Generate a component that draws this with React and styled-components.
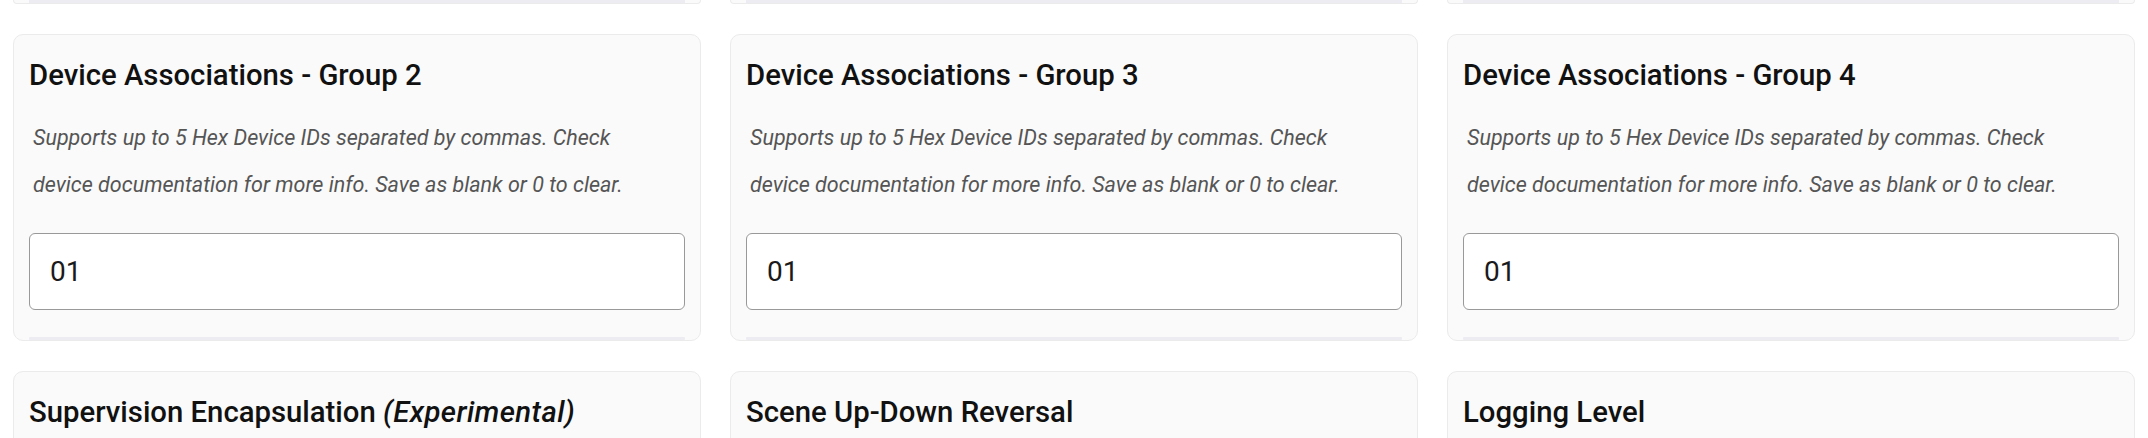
import React from "react";
import styled, { createGlobalStyle } from "styled-components";

const Global = createGlobalStyle`
  html, body {
    margin: 0;
    padding: 0;
    background: #ffffff;
    font-family: Roboto, "Noto Sans", "Liberation Sans", sans-serif;
    overflow: hidden;
  }
`;

const Page = styled.div`
  padding: 0 13px;
  height: 438px;
  overflow: hidden;
`;

const Grid = styled.div`
  display: grid;
  grid-template-columns: repeat(3, 1fr);
  column-gap: 29px;
  row-gap: 30px;
`;

const CardTail = styled.div`
  height: 4px;
  box-sizing: border-box;
  background: #fafafa;
  border: 1px solid #ebebeb;
  border-top: none;
  border-radius: 0 0 10px 10px;
  padding: 0 15px;
  display: flex;
  align-items: flex-end;
`;

const Card = styled.div`
  box-sizing: border-box;
  background: #fafafa;
  border: 1px solid #ebebeb;
  border-radius: 10px;
  padding: 0 15px;
  display: flex;
  flex-direction: column;
  height: ${(p) => (p.$open ? "200px" : "307px")};
`;

const Title = styled.h3`
  margin: 24px 0 0;
  font-size: 29.3px;
  line-height: 33px;
  font-weight: 500;
  color: #111111;
  white-space: nowrap;
`;

const Em = styled.em`
  font-style: italic;
  font-weight: 500;
  letter-spacing: 0.4px;
`;

const Description = styled.p`
  margin: 22px 0 0;
  padding-left: 4px;
  max-width: 600px;
  font-size: 21.5px;
  line-height: 47px;
  font-style: italic;
  color: #555555;
`;

const Field = styled.input`
  margin-top: 25px;
  box-sizing: border-box;
  width: 100%;
  height: 77px;
  border: 1.5px solid #999999;
  border-radius: 6px;
  background: #ffffff;
  padding: 0 20px;
  font-family: Roboto, "Noto Sans", sans-serif;
  font-size: 28px;
  color: #1a1a1a;
  outline: none;
`;

const Band = styled.div`
  margin-top: 27px;
  height: 3px;
  background: #ececf2;
  border-radius: 1px;
`;

const TailBand = styled.div`
  height: 3px;
  width: 100%;
  background: #ececf2;
`;

const groups = [2, 3, 4];

const lower = [
  { key: "sup", title: "Supervision Encapsulation", extra: "(Experimental)" },
  { key: "scene", title: "Scene Up-Down Reversal" },
  { key: "log", title: "Logging Level" },
];

export default function App() {
  return (
    <Page>
      <Global />
      <Grid>
        {groups.map((g) => (
          <CardTail key={`tail-${g}`}>
            <TailBand />
          </CardTail>
        ))}
        {groups.map((g) => (
          <Card key={g}>
            <Title>Device Associations - Group {g}</Title>
            <Description>
              Supports up to 5 Hex Device IDs separated by commas. Check device
              documentation for more info. Save as blank or 0 to clear.
            </Description>
            <Field defaultValue="01" readOnly />
            <Band />
          </Card>
        ))}
        {lower.map((c) => (
          <Card key={c.key} $open>
            <Title>
              {c.title}
              {c.extra ? (
                <>
                  {" "}
                  <Em>{c.extra}</Em>
                </>
              ) : null}
            </Title>
          </Card>
        ))}
      </Grid>
    </Page>
  );
}
